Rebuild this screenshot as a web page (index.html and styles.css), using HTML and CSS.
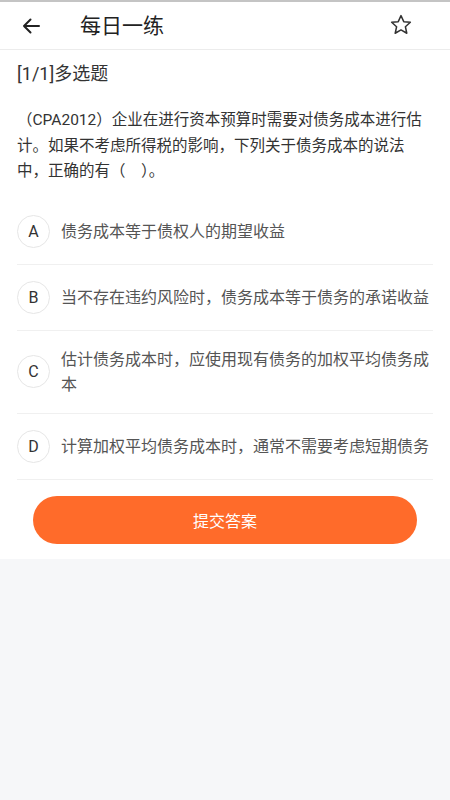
FILE: index.html
```html
<!DOCTYPE html>
<html lang="zh">
<head>
<meta charset="utf-8">
<title>每日一练</title>
<link rel="stylesheet" href="styles.css">
</head>
<body>
<div class="page">
  <header class="bar">
    <div class="bar-left">
      <svg class="icon-back" width="20" height="20" viewBox="0 0 20 20"><path d="M18 10H3M9.5 3.5L3 10l6.5 6.5" fill="none" stroke="#222" stroke-width="2" stroke-linecap="round" stroke-linejoin="round"/></svg>
      <span class="title">每日一练</span>
    </div>
    <svg class="icon-star" width="24" height="24" viewBox="0 0 24 24"><path d="M12 2.6l2.75 6.05 6.6.65-4.95 4.45 1.4 6.5L12 16.9l-5.8 3.35 1.4-6.5L2.65 9.3l6.6-.65z" fill="none" stroke="#333" stroke-width="1.5" stroke-linejoin="round"/></svg>
  </header>
  <main class="content">
    <div class="qtype">[1/1]多选题</div>
    <p class="question">（CPA2012）企业在进行资本预算时需要对债务成本进行估计。如果不考虑所得税的影响，下列关于债务成本的说法中，正确的有（&nbsp;&nbsp;&nbsp;&nbsp;）。</p>
    <ul class="options">
      <li class="option"><span class="letter">A</span><span class="otext">债务成本等于债权人的期望收益</span></li>
      <li class="option"><span class="letter">B</span><span class="otext">当不存在违约风险时，债务成本等于债务的承诺收益</span></li>
      <li class="option"><span class="letter">C</span><span class="otext">估计债务成本时，应使用现有债务的加权平均债务成本</span></li>
      <li class="option"><span class="letter">D</span><span class="otext">计算加权平均债务成本时，通常不需要考虑短期债务</span></li>
    </ul>
    <button class="submit">提交答案</button>
  </main>
  <div class="filler"></div>
</div>
</body>
</html>
```
FILE: styles.css
```css
html, body {
  margin: 0;
  padding: 0;
  height: 100%;
}
body {
  font-family: Roboto, "Noto Sans CJK SC", sans-serif;
  background: #f6f7f9;
  color: #333;
}
.page {
  display: flex;
  flex-direction: column;
  min-height: 100%;
  border-top: 2px solid #c4c4c4;
  box-sizing: border-box;
}
.bar {
  height: 47px;
  background: #fff;
  border-bottom: 1px solid #ececec;
  display: flex;
  align-items: center;
  justify-content: space-between;
  padding: 0 37px 0 21px;
}
.bar-left {
  display: flex;
  align-items: center;
}
.icon-back {
  display: block;
}
.title {
  margin-left: 39px;
  font-size: 21px;
  color: #222;
  line-height: 28px;
}
.icon-star {
  display: block;
  margin-top: -2px;
}
.content {
  background: #fff;
  padding: 12px 17px 15px;
}
.qtype {
  font-size: 18px;
  line-height: 24px;
  color: #333;
}
.question {
  margin: 22px 0 0;
  font-size: 15.5px;
  line-height: 25.5px;
  color: #333;
}
.options {
  list-style: none;
  margin: 14px 0 0;
  padding: 0;
}
.option {
  display: flex;
  align-items: center;
  padding: 16px 0;
  border-bottom: 1px solid #f0f0f0;
}
.letter {
  flex: none;
  width: 31px;
  height: 31px;
  border: 1px solid #e6e6e6;
  border-radius: 50%;
  display: flex;
  align-items: center;
  justify-content: center;
  font-size: 16px;
  color: #333;
}
.otext {
  margin-left: 11px;
  font-size: 16px;
  line-height: 25px;
  color: #555;
}
.submit {
  display: block;
  width: calc(100% - 32px);
  margin: 16px auto 0;
  height: 48px;
  border: none;
  border-radius: 24px;
  background: #ff6b2a;
  color: #fff;
  font-family: "Noto Sans CJK SC", sans-serif;
  font-size: 16px;
}
.filler {
  flex: 1;
  background: #f6f7f9;
}
```
